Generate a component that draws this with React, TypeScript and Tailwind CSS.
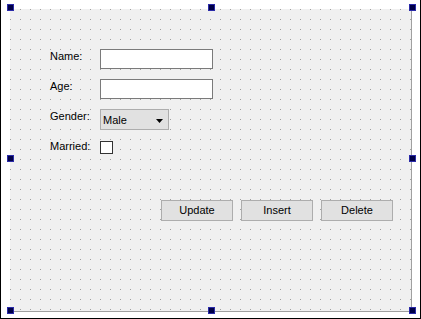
import React from 'react';

const handleSpots = [
  { left: 6, top: 4 },
  { left: 207, top: 4 },
  { left: 408, top: 4 },
  { left: 6, top: 155 },
  { left: 408, top: 155 },
  { left: 6, top: 307 },
  { left: 207, top: 307 },
  { left: 408, top: 307 },
];

const Field: React.FC<{ label: string; children: React.ReactNode }> = ({ label, children }) => (
  <div className="flex items-start h-[20px]">
    <span className="w-[50px] mt-px leading-[13px]">{label}</span>
    {children}
  </div>
);

const Btn: React.FC<{ text: string }> = ({ text }) => (
  <button className="w-[72px] h-[21px] bg-[#e1e1e1] border border-[#adadad] text-[11px] leading-none text-black">
    {text}
  </button>
);

export default function App() {
  return (
    <div
      className="relative w-[421px] h-[319px] bg-white border-l border-r border-b border-black text-[11px] text-black"
      style={{ fontFamily: '"Liberation Sans", Arial, sans-serif' }}
    >
      {/* form canvas */}
      <div className="absolute left-[9px] top-[9px] w-[402px] h-[303px] bg-[#f0f0f0] border-r border-b border-[#a0a0a0] bg-[conic-gradient(at_1px_1px,transparent_75%,#a0a0a0_0)] bg-[length:10px_10px] bg-[position:0px_0px] pl-[40px] pt-[40px]">
        <div className="flex flex-col gap-[10px]">
          <Field label="Name:">
            <div className="w-[113px] h-[20px] bg-white border border-[#7a7a7a]" />
          </Field>
          <Field label="Age:">
            <div className="w-[113px] h-[20px] bg-white border border-[#7a7a7a]" />
          </Field>
          <Field label="Gender:">
            <div className="w-[69px] h-[21px] bg-[#e1e1e1] border border-[#adadad] flex items-center justify-between pl-[2px] pr-[5px] pt-[2px]">
              <span className="leading-none">Male</span>
              <svg width="7" height="4" viewBox="0 0 7 4">
                <polygon points="0,0 7,0 3.5,4" fill="#000" />
              </svg>
            </div>
          </Field>
          <Field label="Married:">
            <div className="w-[13px] h-[13px] mt-[2px] bg-white border border-[#333333]" />
          </Field>
        </div>
        <div className="flex gap-[8px] ml-[111px] mt-[41px]">
          <Btn text="Update" />
          <Btn text="Insert" />
          <Btn text="Delete" />
        </div>
      </div>

      {/* selection handles */}
      {handleSpots.map((h, i) => (
        <div
          key={i}
          className="absolute w-[7px] h-[7px] bg-[#000048] border border-[#2a2aa8]"
          style={{ left: h.left, top: h.top }}
        />
      ))}
    </div>
  );
}
